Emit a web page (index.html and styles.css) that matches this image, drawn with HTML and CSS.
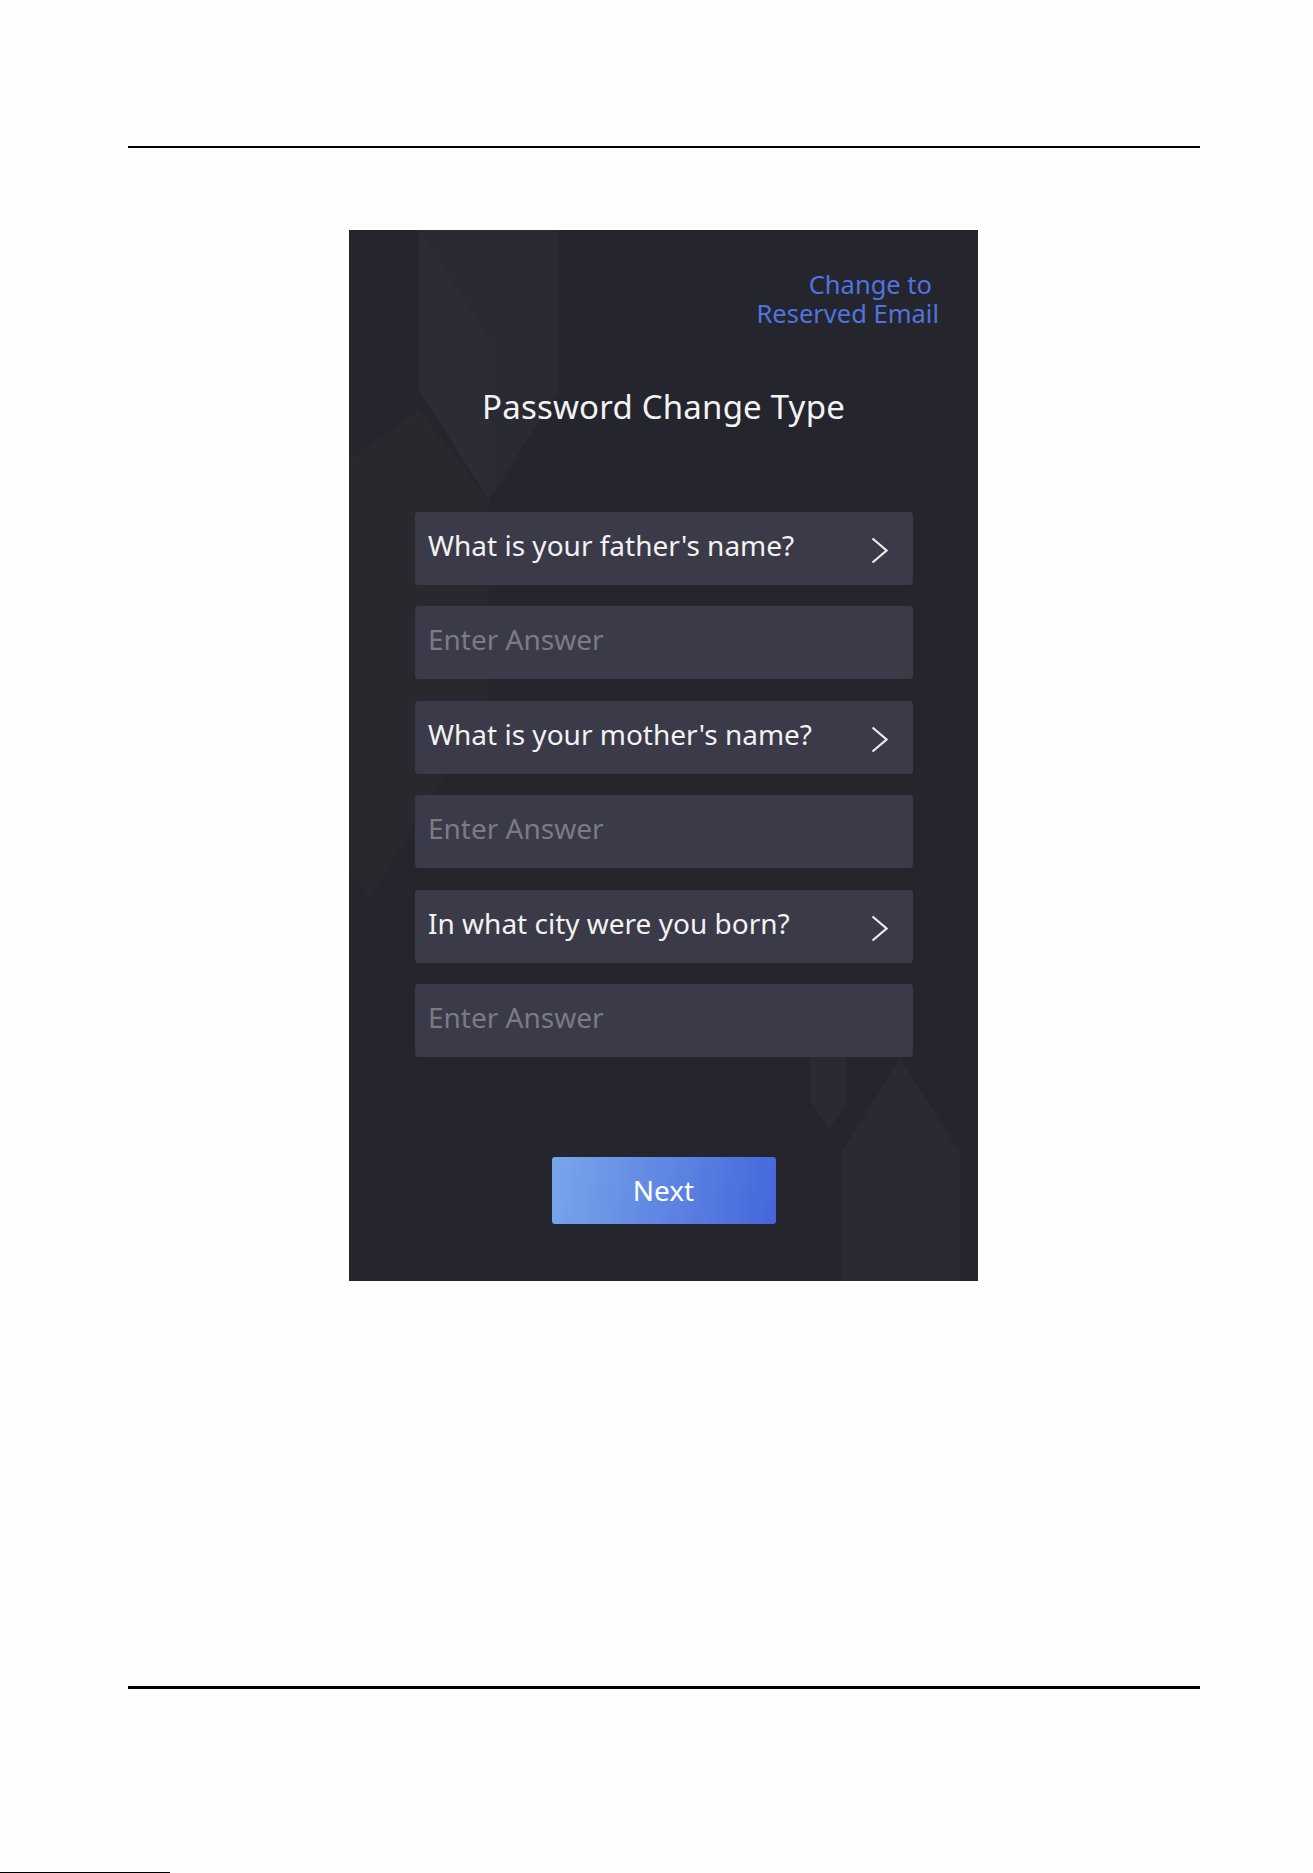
FILE: index.html
```html
<!DOCTYPE html>
<html lang="en">
<head>
<meta charset="utf-8">
<title>Password Change Type</title>
<link rel="stylesheet" href="styles.css">
</head>
<body>
<div class="page">
  <div class="rule rule-top"></div>
  <div class="screen">
    <svg class="bg" width="629" height="1051" viewBox="0 0 629 1051" aria-hidden="true">
      <polygon points="70,0 210,0 210,160 140,270 70,160" fill="#2a2a32"/>
      <polygon points="70,0 140,107 140,270 70,160" fill="#2c2c34"/>
      <polygon points="0,230 70,180 140,270 140,473 21,668 0,640" fill="#28282f"/>
      <polygon points="462,800 498,800 498,872 480,900 462,872" fill="#2a2a32"/>
      <polygon points="551,828 611,923 611,1051 492,1051 492,923" fill="#2a2a32"/>
    </svg>
    <div class="content">
      <div class="switch">
        <span class="switch-line first">Change to</span>
        <span class="switch-line">Reserved Email</span>
      </div>
      <h1 class="title">Password Change Type</h1>
      <div class="form">
        <div class="row question">
          <span class="row-text">What is your father's name?</span>
          <svg class="chev" width="17" height="27" viewBox="0 0 17 27"><polyline points="1.5,1.5 15.5,13.5 1.5,25.5" fill="none" stroke="#ececec" stroke-width="2.2"/></svg>
        </div>
        <div class="row answer"><span class="row-text placeholder">Enter Answer</span></div>
        <div class="row question">
          <span class="row-text">What is your mother's name?</span>
          <svg class="chev" width="17" height="27" viewBox="0 0 17 27"><polyline points="1.5,1.5 15.5,13.5 1.5,25.5" fill="none" stroke="#ececec" stroke-width="2.2"/></svg>
        </div>
        <div class="row answer"><span class="row-text placeholder">Enter Answer</span></div>
        <div class="row question">
          <span class="row-text">In what city were you born?</span>
          <svg class="chev" width="17" height="27" viewBox="0 0 17 27"><polyline points="1.5,1.5 15.5,13.5 1.5,25.5" fill="none" stroke="#ececec" stroke-width="2.2"/></svg>
        </div>
        <div class="row answer"><span class="row-text placeholder">Enter Answer</span></div>
      </div>
      <div class="actions">
        <div class="btn">Next</div>
      </div>
    </div>
  </div>
  <div class="rule rule-bottom"></div>
  <div class="edge"></div>
</div>
</body>
</html>
```
FILE: styles.css
```css
html, body {
  margin: 0;
  padding: 0;
  background: #fefefe;
}
body {
  font-family: "Noto Sans", "Open Sans", sans-serif;
}
.page {
  width: 1313px;
  height: 1873px;
  overflow: hidden;
  padding-top: 146px;
  box-sizing: border-box;
}
.rule {
  margin-left: 128px;
  width: 1072px;
  background: #000;
}
.rule-top {
  height: 2px;
}
.rule-bottom {
  height: 3px;
  margin-top: 405px;
}
.edge {
  margin-top: 183px;
  width: 170px;
  height: 1px;
  background: #000;
}
.screen {
  position: relative;
  margin-top: 82px;
  margin-left: 349px;
  width: 629px;
  height: 1051px;
  background: #25252d;
  overflow: hidden;
}
.bg {
  position: absolute;
  left: 0;
  top: 0;
}
.content {
  position: relative;
  display: flex;
  flex-direction: column;
}
.switch {
  margin-top: 40px;
  padding-right: 39px;
  display: flex;
  flex-direction: column;
  align-items: flex-end;
  color: #5073e0;
  font-size: 25.5px;
  line-height: 28.5px;
}
.switch-line.first {
  padding-right: 7px;
}
.title {
  margin: 57.5px 0 0 0;
  text-align: center;
  color: #f3f3f3;
  font-weight: normal;
  font-size: 33px;
  letter-spacing: 0.2px;
  line-height: 44px;
}
.form {
  margin: 83px 65px 0 66px;
  display: flex;
  flex-direction: column;
  gap: 21.6px;
}
.row {
  height: 73px;
  box-sizing: border-box;
  padding: 14px 25px 0 13px;
  background: #3b3a48;
  border-radius: 4px;
  display: flex;
  justify-content: space-between;
  align-items: flex-start;
}
.row-text {
  font-size: 28px;
  line-height: 38px;
  color: #f2f2f2;
  white-space: nowrap;
}
.row-text.placeholder {
  color: #7b7b83;
}
.chev {
  margin-top: 11px;
  flex: none;
}
.actions {
  margin-top: 100px;
  display: flex;
  justify-content: center;
}
.btn {
  width: 224px;
  height: 67px;
  border-radius: 3px;
  background: linear-gradient(100deg, #78a6ea 0%, #5f86e2 50%, #4466dc 100%);
  color: #ffffff;
  font-size: 28px;
  line-height: 67px;
  text-align: center;
}
```
